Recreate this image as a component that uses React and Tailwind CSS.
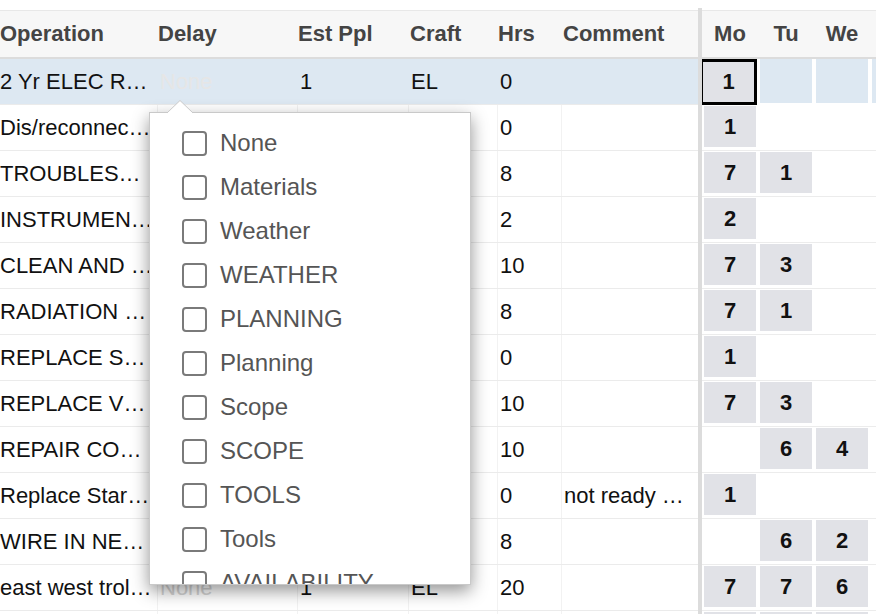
import React from "react";

const rows = [
  { op: "2 Yr ELEC R…", hrs: "0", days: ["1", "", "", ""], sel: true, show: true },
  { op: "Dis/reconnec…", hrs: "0", days: ["1", "", "", ""] },
  { op: "TROUBLES…", hrs: "8", days: ["7", "1", "", ""] },
  { op: "INSTRUMEN…", hrs: "2", days: ["2", "", "", ""] },
  { op: "CLEAN AND …", hrs: "10", days: ["7", "3", "", ""] },
  { op: "RADIATION …", hrs: "8", days: ["7", "1", "", ""] },
  { op: "REPLACE S…", hrs: "0", days: ["1", "", "", ""] },
  { op: "REPLACE V…", hrs: "10", days: ["7", "3", "", ""] },
  { op: "REPAIR CO…", hrs: "10", days: ["", "6", "4", ""] },
  { op: "Replace Star…", hrs: "0", comment: "not ready …", days: ["1", "", "", ""] },
  { op: "WIRE IN NE…", hrs: "8", days: ["", "6", "2", ""] },
  { op: "east west trol…", hrs: "20", days: ["7", "7", "6", ""], show: true },
  { op: "", hrs: "", days: [" ", " ", " ", ""], blank: true },
];

const options = [
  "None",
  "Materials",
  "Weather",
  "WEATHER",
  "PLANNING",
  "Planning",
  "Scope",
  "SCOPE",
  "TOOLS",
  "Tools",
  "AVAILABILITY",
];

function LeftRow({ r }) {
  const bg = r.sel ? "bg-[#dde8f2]" : "bg-white";
  const line = r.sel ? "border-[#dde8f2]" : "border-[#f2f2f2]";
  return (
    <div className={`flex h-[46px] shrink-0 border-b border-[#ebebeb] ${bg} text-[22px] leading-none text-[#111]`}>
      <div className="w-[157px] flex items-center whitespace-nowrap overflow-hidden">{r.op}</div>
      <div className={`w-[140px] flex items-center pl-[2px] border-l ${line} ${r.sel ? "text-[#e6e6e6]" : "text-[#d6d6d6]"}`}>
        {r.show ? "None" : ""}
      </div>
      <div className={`w-[111px] flex items-center pl-[2px] border-l ${line}`}>{r.show ? "1" : ""}</div>
      <div className={`w-[89px] flex items-center pl-[2px] border-l ${line}`}>{r.show ? "EL" : ""}</div>
      <div className={`w-[64px] flex items-center pl-[2px] border-l ${line}`}>{r.hrs}</div>
      <div className={`flex-1 flex items-center pl-[2px] border-l ${line} whitespace-nowrap`}>{r.comment || ""}</div>
    </div>
  );
}

function DayRow({ r }) {
  return (
    <div className={`flex h-[46px] shrink-0 ${r.sel ? "" : "border-b border-[#ececec]"} text-[22px] leading-none font-bold text-[#111]`}>
      {r.days.map((v, i) => {
        if (r.sel && i === 0) {
          return (
            <div key={i} className="w-[56px] shrink-0 h-full pr-[1px]">
              <div className="-ml-[2px] h-full border-[3px] border-black bg-[#e1e2e7] flex items-center justify-center">
                {v}
              </div>
            </div>
          );
        }
        if (r.sel) {
          return (
            <div key={i} className="w-[56px] shrink-0 h-full px-[2px] pb-[2px] bg-white">
              <div className="h-full bg-[#dde8f2]" />
            </div>
          );
        }
        return (
          <div key={i} className="w-[56px] shrink-0 h-full px-[2px] pt-[1px] pb-[3px]">
            <div className={`h-full flex items-center justify-center ${v ? "bg-[#e1e2e7]" : "bg-white"}`}>{v.trim()}</div>
          </div>
        );
      })}
    </div>
  );
}

export default function App() {
  return (
    <div className="relative w-[876px] h-[614px] overflow-hidden bg-white font-['Liberation_Sans',Arial,sans-serif]">
      <div className="flex pt-[8px] h-full">
        {/* left pane */}
        <div className="w-[698px] shrink-0 pt-[2px] flex flex-col">
          <div className="flex h-[49px] shrink-0 bg-[#f7f7f7] border-t border-[#e8e8e8] border-b-2 border-b-[#dcdcdc] text-[22px] leading-none font-bold text-[#444]">
            <div className="w-[157px] flex items-center">Operation</div>
            <div className="w-[140px] flex items-center pl-[1px]">Delay</div>
            <div className="w-[111px] flex items-center pl-[1px]">Est Ppl</div>
            <div className="w-[89px] flex items-center pl-[2px]">Craft</div>
            <div className="w-[64px] flex items-center pl-[1px]">Hrs</div>
            <div className="flex-1 flex items-center pl-[2px]">Comment</div>
          </div>
          {rows.map((r, i) => (
            <LeftRow key={i} r={r} />
          ))}
        </div>
        {/* divider */}
        <div className="w-[4px] shrink-0 bg-[#dcdcdc]" />
        {/* right pane */}
        <div className="flex-1 pt-[2px] flex flex-col overflow-hidden">
          <div className="flex h-[49px] shrink-0 bg-[#f7f7f7] border-t border-[#e8e8e8] border-b-2 border-b-[#dcdcdc] text-[22px] leading-none font-bold text-[#444]">
            {["Mo", "Tu", "We", ""].map((d, i) => (
              <div key={i} className="w-[56px] shrink-0 flex items-center justify-center">
                {d}
              </div>
            ))}
          </div>
          {rows.map((r, i) => (
            <DayRow key={i} r={r} />
          ))}
        </div>
      </div>

      {/* dropdown popup */}
      <div className="absolute left-[149px] top-[112px] w-[322px] h-[473px] bg-white border border-[#c9c9c9] shadow-[0_6px_16px_rgba(0,0,0,0.42)] overflow-hidden">
        <div className="flex flex-col pt-[8px]">
          {options.map((o) => (
            <div key={o} className="flex items-center h-[44px] shrink-0 pl-[32px]">
              <div className="w-[25px] h-[25px] rounded-[4px] border-2 border-[#7a7a7a] bg-white shrink-0" />
              <span className="ml-[13px] text-[24px] leading-none text-[#555] whitespace-nowrap">{o}</span>
            </div>
          ))}
        </div>
      </div>
      <svg className="absolute left-[166px] top-[100px]" width="28" height="14" viewBox="0 0 28 14">
        <polygon points="1,13 14,0.5 27,13" fill="#ffffff" />
        <polyline points="1,13 14,0.5 27,13" fill="none" stroke="#c9c9c9" strokeWidth="1" />
        <rect x="2" y="12.6" width="24" height="1.4" fill="#ffffff" />
      </svg>
    </div>
  );
}
